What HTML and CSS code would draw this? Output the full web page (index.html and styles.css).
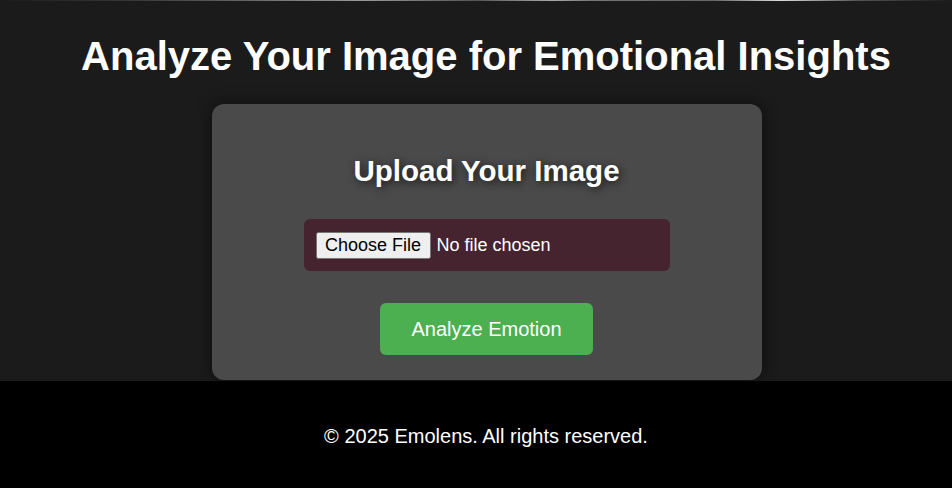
FILE: index.html
```html
<!DOCTYPE html>
<html lang="en">
<head>
<meta charset="utf-8">
<title>Emolens</title>
<link rel="stylesheet" href="styles.css">
</head>
<body>
<div class="topline"></div>
<main class="main">
  <h1 class="title">Analyze Your Image for Emotional Insights</h1>
  <section class="card">
    <h2 class="card-title">Upload Your Image</h2>
    <div class="file-box">
      <input class="file-input" type="file" accept="image/*">
    </div>
    <button class="analyze-btn" type="button">Analyze Emotion</button>
  </section>
</main>
<footer class="footer">
  <p class="footer-text">&copy; 2025 Emolens. All rights reserved.</p>
</footer>
</body>
</html>
```

FILE: styles.css
```css
html, body {
  margin: 0;
  padding: 0;
}
body {
  background: #1b1b1b;
  font-family: "Liberation Sans", Arial, sans-serif;
  color: #fff;
}
.topline {
  height: 1px;
  background: linear-gradient(to right, #1b1b1b 0%, #3a3a3a 15%, #9a9a9a 38%, #555 50%, #aaa 58%, #777 62%, #666 75%, #ddd 82%, #555 90%, #1b1b1b 100%);
}
.main {
  display: flex;
  flex-direction: column;
  align-items: center;
  padding: 32px 0 0 20px;
}
.title {
  margin: 0 0 25px;
  font-size: 40px;
  font-weight: bold;
  line-height: 46px;
  text-align: center;
}
.card {
  box-sizing: border-box;
  width: 550px;
  margin-left: 1px;
  padding: 50px 0 25px;
  background: #4a4a4a;
  border-radius: 12px;
  box-shadow: 0 0 16px rgba(0, 0, 0, 0.55);
  display: flex;
  flex-direction: column;
  align-items: center;
}
.card-title {
  margin: 0 0 32px;
  font-size: 29.5px;
  line-height: 33px;
  font-weight: bold;
  text-shadow: 2px 2px 9px rgba(0, 0, 0, 0.7);
}
.file-box {
  box-sizing: border-box;
  width: 366px;
  height: 52px;
  padding: 0 12px;
  background: #45232f;
  border-radius: 6px;
  display: flex;
  align-items: center;
  margin-bottom: 32px;
}
.file-input {
  font-family: "Liberation Sans", Arial, sans-serif;
  font-size: 18px;
  color: #fff;
}
.file-input::file-selector-button {
  padding: 1px 7.5px;
  margin-right: 6px;
}
.analyze-btn {
  width: 213px;
  height: 52px;
  border: none;
  border-radius: 6px;
  background: #4caf50;
  color: #fff;
  font-family: "Liberation Sans", Arial, sans-serif;
  font-size: 20px;
  cursor: pointer;
}
.footer {
  margin-top: 1px;
  background: #000;
  padding: 44px 0 40px 20px;
  text-align: center;
}
.footer-text {
  margin: 0;
  font-size: 20px;
  line-height: 23px;
}
```
